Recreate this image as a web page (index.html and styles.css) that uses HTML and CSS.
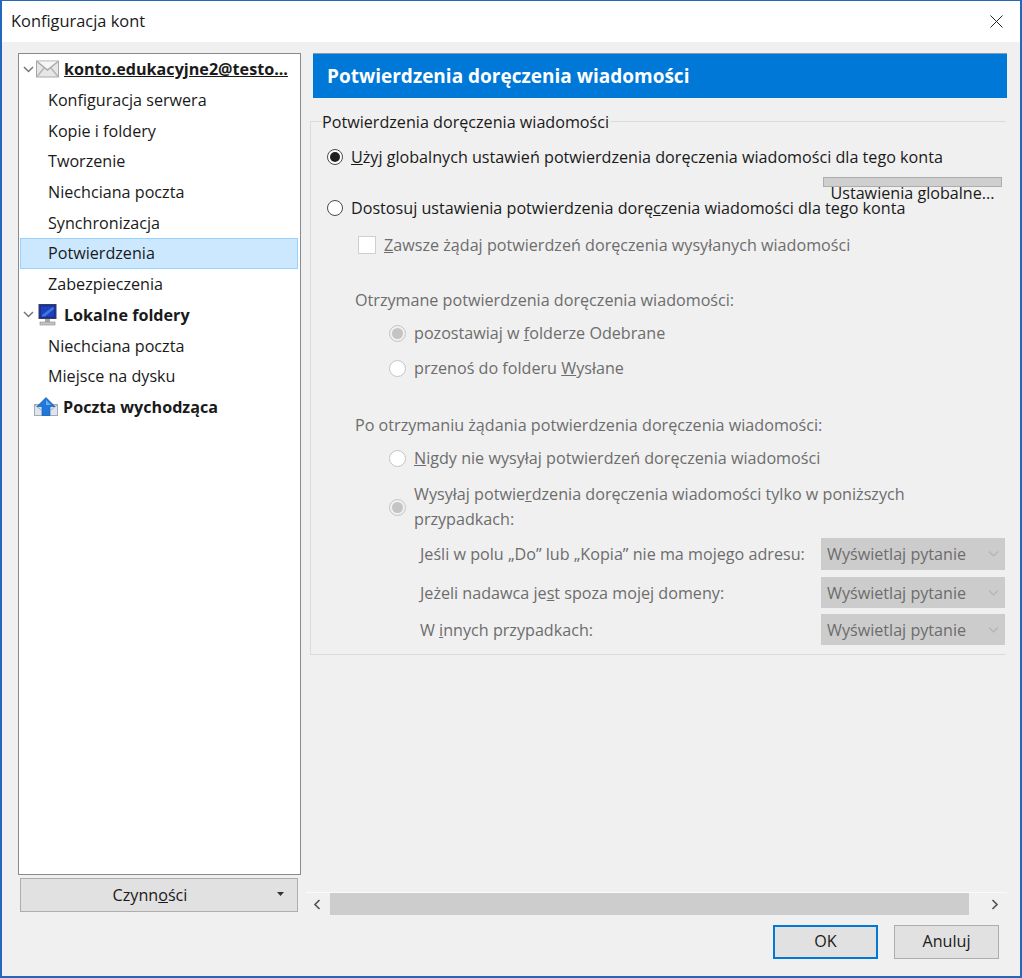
FILE: index.html
```html
<!DOCTYPE html>
<html lang="pl">
<head>
<meta charset="utf-8">
<title>Konfiguracja kont</title>
<link rel="stylesheet" href="styles.css">
</head>
<body>
<div class="window">
	<div class="titlebar">
		<span class="title">Konfiguracja kont</span>
		<svg class="close" width="13" height="13" viewBox="0 0 13 13"><path d="M0.5 0.5L12.5 12.5M12.5 0.5L0.5 12.5" stroke="#222" stroke-width="1" fill="none"/></svg>
	</div>
	<div class="content">
		<div class="leftcol">
			<div class="tree">
				<div class="treerow account">
					<svg class="chev" width="11" height="7" viewBox="0 0 11 7"><path d="M1 1L5.5 5.5L10 1" stroke="#777" stroke-width="1.5" fill="none"/></svg>
					<svg class="acc-icon" width="23" height="18" viewBox="0 0 23 18"><rect x="0.5" y="1" width="22" height="16" fill="#e6e6e6" stroke="#a8a8a8"/><path d="M1 1.5L11.5 10L22 1.5" fill="#f6f6f6" stroke="#a8a8a8" stroke-width="1.4"/><path d="M1 16.5L8.5 7.5M22 16.5L14.5 7.5" stroke="#b4b4b4" stroke-width="1.4" fill="none"/></svg>
					<span class="acc-name underlined">konto.edukacyjne2@testo...</span>
				</div>
				<div class="treerow sub">Konfiguracja serwera</div>
				<div class="treerow sub">Kopie i foldery</div>
				<div class="treerow sub">Tworzenie</div>
				<div class="treerow sub">Niechciana poczta</div>
				<div class="treerow sub">Synchronizacja</div>
				<div class="treerow sub selected">Potwierdzenia</div>
				<div class="treerow sub">Zabezpieczenia</div>
				<div class="treerow account">
					<svg class="chev" width="11" height="7" viewBox="0 0 11 7"><path d="M1 1L5.5 5.5L10 1" stroke="#777" stroke-width="1.5" fill="none"/></svg>
					<svg class="acc-icon" width="23" height="22" viewBox="0 0 23 22"><rect x="3" y="0.5" width="17" height="14" fill="#1b2f9c" stroke="#33415e"/><path d="M5 2.5H18V12.5H5Z" fill="#1e3fc0"/><path d="M6 11L16 3.5H18V5L9 12.5H6Z" fill="#3f78dc"/><rect x="9" y="15" width="5" height="3" fill="#a9a9a9"/><rect x="4" y="18" width="15" height="3" fill="#c4c4c4" stroke="#8c8c8c" stroke-width="0.6"/></svg>
					<span class="acc-name">Lokalne foldery</span>
				</div>
				<div class="treerow sub">Niechciana poczta</div>
				<div class="treerow sub">Miejsce na dysku</div>
				<div class="treerow account noarrow">
					<svg class="acc-icon" width="24" height="20" viewBox="0 0 24 20"><rect x="0.5" y="7.5" width="23" height="11" fill="#dfe5ee" stroke="#a4abb6"/><path d="M1 8L7 13M23 8L17 13" stroke="#a4abb6" fill="none"/><path d="M12 0.5L21 9.5H16V18.5H8V9.5H3Z" fill="#1f78dc" stroke="#145cb0" stroke-width="0.7"/><path d="M12 3L17 8H12Z" fill="#66aef0"/></svg>
					<span class="acc-name">Poczta wychodząca</span>
				</div>
			</div>
			<div class="actions">
				<span>Czynn<u>o</u>ści</span>
				<svg class="caret" width="7" height="4" viewBox="0 0 7 4"><path d="M0 0H7L3.5 4Z" fill="#333"/></svg>
			</div>
		</div>
		<div class="rightcol">
			<div class="header">Potwierdzenia doręczenia wiadomości</div>
			<div class="section">
				<div class="legend">Potwierdzenia doręczenia wiadomości</div>
				<div class="line global-use"><span class="radio checked"></span><span><u>U</u>żyj globalnych ustawień potwierdzenia doręczenia wiadomości dla tego konta</span></div>
				<div class="global-row">
					<div class="global-btn"><span class="global-label">Ustawienia globalne...</span></div>
				</div>
				<div class="line custom-use"><span class="radio"></span><span>Dostosuj ustawienia potwierdzenia dorę<u>c</u>zenia wiadomości dla tego konta</span></div>
				<div class="line always off"><span class="check"></span><span><u>Z</u>awsze żądaj potwierdzeń doręczenia wysyłanych wiadomości</span></div>

				<div class="caption off received">Otrzymane potwierdzenia doręczenia wiadomości:</div>
				<div class="line opt opt-first off"><span class="radio dim checked"></span><span>pozostawiaj w <u>f</u>olderze Odebrane</span></div>
				<div class="line opt opt-second off"><span class="radio dim"></span><span>przenoś do folderu <u>W</u>ysłane</span></div>

				<div class="caption off request">Po otrzymaniu żądania potwierdzenia doręczenia wiadomości:</div>
				<div class="line opt opt-first off"><span class="radio dim"></span><span><u>N</u>igdy nie wysyłaj potwierdzeń doręczenia wiadomości</span></div>
				<div class="line opt opt-multi off"><span class="radio dim checked"></span><span>Wysyłaj potwie<u>r</u>dzenia doręczenia wiadomości tylko w poniższych<br>przypadkach:</span></div>

				<div class="selrow off sel-a"><span>Jeśli w polu „Do” lub „Kopia” nie ma mojego adresu:</span>
					<div class="select"><span>Wyświetlaj pytanie</span><svg width="11" height="6" viewBox="0 0 11 6"><path d="M1 0.5L5.5 5L10 0.5" stroke="#b4b4b4" stroke-width="1.2" fill="none"/></svg></div>
				</div>
				<div class="selrow off sel-b"><span>Jeżeli nadawca je<u>s</u>t spoza mojej domeny:</span>
					<div class="select"><span>Wyświetlaj pytanie</span><svg width="11" height="6" viewBox="0 0 11 6"><path d="M1 0.5L5.5 5L10 0.5" stroke="#b4b4b4" stroke-width="1.2" fill="none"/></svg></div>
				</div>
				<div class="selrow off sel-c"><span>W <u>i</u>nnych przypadkach:</span>
					<div class="select"><span>Wyświetlaj pytanie</span><svg width="11" height="6" viewBox="0 0 11 6"><path d="M1 0.5L5.5 5L10 0.5" stroke="#b4b4b4" stroke-width="1.2" fill="none"/></svg></div>
				</div>
			</div>
			<div class="spacer"></div>
			<div class="scrollbar">
				<svg class="arrow" width="8" height="11" viewBox="0 0 8 11"><path d="M6.5 1L2 5.5L6.5 10" stroke="#555" stroke-width="1.7" fill="none"/></svg>
				<div class="thumb"></div>
				<svg class="arrow" width="8" height="11" viewBox="0 0 8 11"><path d="M1.5 1L6 5.5L1.5 10" stroke="#555" stroke-width="1.7" fill="none"/></svg>
			</div>
			<div class="buttons">
				<div class="btn default">OK</div>
				<div class="btn">Anuluj</div>
			</div>
		</div>
	</div>
</div>
</body>
</html>
```

FILE: styles.css
```css
html, body{
	margin: 0;
	padding: 0;
	height: 100%;
}
body{
	font-family: "Open Sans", "Noto Sans", sans-serif;
	font-size: 16.15px;
	color: #1a1a1a;
	background: #f0f0f0;
}
.window{
	box-sizing: border-box;
	width: 1022px;
	height: 978px;
	border: 2px solid #2468bc;
	border-top-width: 1px;
	display: flex;
	flex-direction: column;
	background: #f0f0f0;
}
.titlebar{
	height: 41px;
	flex: none;
	background: #fff;
	display: flex;
	align-items: center;
	justify-content: space-between;
	padding: 0 17px 0 9px;
}
.title{
	font-size: 16.4px;
	line-height: 40px;
	height: 41px;
}
.content{
	flex: 1;
	display: flex;
	padding: 11px 13px 0 16px;
	min-height: 0;
}
.leftcol{
	width: 283px;
	flex: none;
	display: flex;
	flex-direction: column;
	margin-bottom: 64px;
}
.tree{
	flex: 1;
	background: #fff;
	border: 1px solid #8a8a8a;
}
.treerow{
	height: 30.7px;
	box-sizing: border-box;
	display: flex;
	align-items: center;
}
.sub{
	padding-left: 29px;
}
.selected{
	margin: 0 2px 0 1px;
	padding-left: 27px;
	background: #cce8ff;
	border: 1px solid #99d1ff;
}
.account{
	font-weight: 700;
	padding-left: 4px;
}
.noarrow{
	padding-left: 15px;
}
.chev{
	flex: none;
	margin-right: 2px;
}
.acc-icon{
	flex: none;
	margin-right: 5px;
}
.acc-name{
	white-space: nowrap;
}
.underlined{
	text-decoration: underline;
}
.actions{
	height: 34px;
	margin: 3px 3px 0 2px;
	box-sizing: border-box;
	background: #e1e1e1;
	border: 1px solid #adadad;
	display: flex;
	align-items: center;
	justify-content: center;
	position: relative;
	padding: 0 18px 1px 0;
}
.caret{
	position: absolute;
	right: 13px;
	top: 13px;
}
.rightcol{
	flex: 1;
	margin-left: 9px;
	display: flex;
	flex-direction: column;
	padding-bottom: 17px;
	min-width: 0;
}
.header{
	flex: none;
	box-sizing: border-box;
	height: 45px;
	margin-left: 3px;
	padding-left: 14px;
	background: #0078d7;
	border-top: 1px solid #8a9aa8;
	color: #fff;
	font-size: 19px;
	font-weight: 700;
	line-height: 44px;
}
.section{
	flex: none;
	margin-top: 23px;
	width: 696px;
	box-sizing: border-box;
	border: 1px solid #dcdcdc;
	border-right: 0;
	padding-bottom: 9px;
}
.legend{
	display: block;
	width: fit-content;
	height: 24px;
	line-height: 22px;
	margin: -11px 0 0 11px;
	background: #f0f0f0;
	padding-right: 1px;
}
.line{
	display: flex;
	align-items: center;
	height: 24px;
	white-space: nowrap;
}
.global-use{
	margin-top: 10px;
	padding-left: 16px;
}
.custom-use{
	margin-top: 9px;
	padding-left: 16px;
}
.global-row{
	margin-top: 8px;
	padding-left: 512px;
}
.global-btn{
	box-sizing: border-box;
	width: 179px;
	height: 10px;
	background: #cfcfcf;
	border: 1px solid #adadad;
}
.global-label{
	display: block;
	margin-top: 3px;
	line-height: 24px;
	text-align: center;
	white-space: nowrap;
}
.always{
	margin-top: 13px;
	padding-left: 47px;
}
.check{
	flex: none;
	width: 18px;
	height: 18px;
	box-sizing: border-box;
	background: #fff;
	border: 1px solid #cfcfcf;
	margin-right: 8px;
}
.radio{
	flex: none;
	width: 16px;
	height: 16px;
	box-sizing: border-box;
	border-radius: 50%;
	border: 1px solid #4a4a4a;
	background: #fff;
	margin-right: 8px;
	display: flex;
	align-items: center;
	justify-content: center;
}
.radio.checked::after{
	content: "";
	width: 10px;
	height: 10px;
	border-radius: 50%;
	background: #1f1f1f;
}
.radio.dim{
	width: 17px;
	height: 17px;
	border-color: #c4c4c4;
	margin-right: 8px;
}
.radio.dim.checked{
	background: #f0f0f0;
}
.radio.dim.checked::after{
	width: 11px;
	height: 11px;
	background: #c4c4c4;
}
.off{
	color: #6d6d6d;
}
.caption{
	height: 24px;
	line-height: 22px;
	padding-left: 44px;
}
.received{
	margin-top: 32px;
}
.request{
	margin-top: 34px;
}
.opt{
	padding-left: 78px;
}
.opt-first{
	margin-top: 8px;
}
.opt-second{
	margin-top: 11px;
}
.opt-multi{
	height: 50px;
	line-height: 25px;
	margin-top: 12px;
}
.selrow{
	display: flex;
	align-items: center;
	justify-content: space-between;
	padding-left: 109px;
}
.sel-a{
	margin-top: 6px;
}
.sel-b{
	margin-top: 7px;
}
.sel-c{
	margin-top: 6px;
}
.select{
	box-sizing: border-box;
	width: 184px;
	height: 31px;
	margin-right: 1px;
	background: #cccccc;
	display: flex;
	align-items: center;
	justify-content: space-between;
	padding: 0 6px;
}
.sel-a .select{
	height: 32px;
}
.spacer{
	flex: 1;
}
.scrollbar{
	flex: none;
	height: 23px;
	margin-left: -4px;
	border-top: 1px solid #fbfbfb;
	box-sizing: border-box;
	display: flex;
	align-items: center;
}
.arrow{
	flex: none;
	margin: 0 7px 0 7px;
}
.scrollbar .arrow:last-child{
	margin: 0 8px 0 22px;
}
.thumb{
	width: 639px;
	height: 22px;
	background: #cdcdcd;
	margin-left: 2px;
}
.buttons{
	flex: none;
	margin-top: 10px;
	margin-right: 8px;
	display: flex;
	justify-content: flex-end;
	gap: 16px;
}
.btn{
	box-sizing: border-box;
	width: 105px;
	height: 34px;
	background: #e1e1e1;
	border: 1px solid #adadad;
	text-align: center;
	line-height: 30px;
}
.btn.default{
	border: 2px solid #0078d7;
	line-height: 28px;
}
```
